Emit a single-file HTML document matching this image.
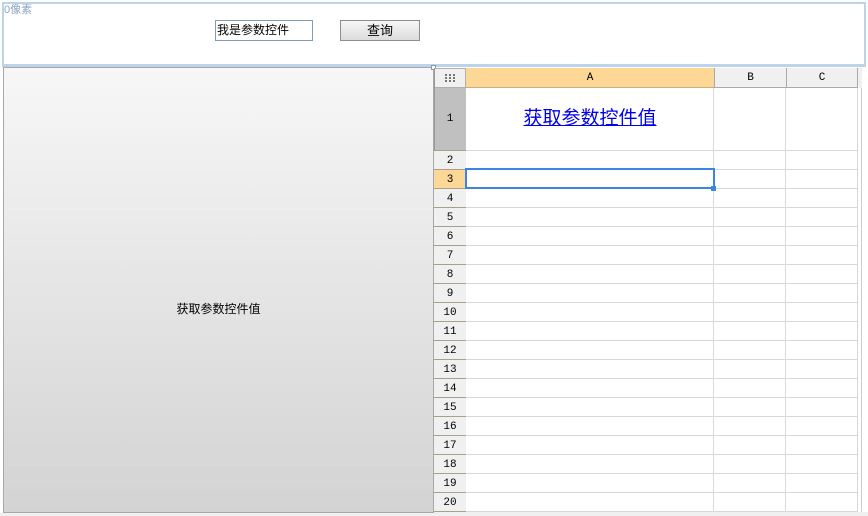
<!DOCTYPE html>
<html><head><meta charset="utf-8"><style>
*{margin:0;padding:0;box-sizing:border-box}
body{width:868px;height:516px;background:#fff;position:relative;overflow:hidden;font-family:"Liberation Sans","Noto Sans CJK SC",sans-serif;font-size:12px}
.a{position:absolute}
.rh{position:absolute;left:434px;width:32px;background:#f0f0f0;border-bottom:1px solid #a8a08c;text-align:center;font-family:"Liberation Mono","Noto Sans CJK SC",monospace;font-size:11px;color:#000;height:19px;line-height:20px}
.hl{position:absolute;left:466px;width:392px;height:1px;background:#d8d8d8}
</style></head><body>
<div class="a" style="left:2px;top:2px;width:864px;height:65px;border:2px solid #bcd3ea;border-bottom-width:3px"></div>
<div class="a" style="left:4px;top:1px;color:#8aa5c4;font-size:11px">0像素</div>
<div class="a" style="left:215px;top:20px;width:98px;height:21px;border:1px solid #7f9db9;font-size:12px;line-height:19px;padding-left:1px">我是参数控件</div>
<div class="a" style="left:340px;top:20px;width:80px;height:21px;border:1px solid #8e8e8e;background:linear-gradient(#f6f6f6,#dcdcdc);text-align:center;line-height:19px;font-size:13px">查询</div>
<div class="a" style="left:3px;top:67px;width:431px;height:446px;border:1px solid #a8a8a8;background:linear-gradient(#f7f7f7,#d3d3d3)"></div>
<div class="a" style="left:3px;top:300px;width:431px;text-align:center;font-size:12px">获取参数控件值</div>
<div class="a" style="left:431px;top:65px;width:5px;height:5px;border:1px solid #7f9db9;background:#fff"></div>
<div class="a" style="left:434px;top:68px;width:428px;height:445px;background:#fff;border-right:1px solid #ccc"></div>
<div class="a" style="left:434px;top:68px;width:32px;height:20px;background:#f0f0f0;border:1px solid #b0b0b0"><svg width="30" height="18" style="position:absolute;left:0;top:0"><g fill="#777"><rect x="10" y="5" width="2" height="2"/><rect x="14" y="5" width="2" height="2"/><rect x="18" y="5" width="2" height="2"/><rect x="10" y="8" width="2" height="2"/><rect x="14" y="8" width="2" height="2"/><rect x="18" y="8" width="2" height="2"/><rect x="10" y="11" width="2" height="2"/><rect x="14" y="11" width="2" height="2"/><rect x="18" y="11" width="2" height="2"/></g></svg></div>
<div class="a" style="left:466px;top:68px;width:248px;height:20px;background:#fdd795;border-bottom:1px solid #c8b080;text-align:center;line-height:20px;font-family:'Liberation Mono',monospace;font-size:11px">A</div>
<div class="a" style="left:714px;top:68px;width:72px;height:20px;background:#f0f0f0;border-left:1px solid #aaa;border-bottom:1px solid #aaa;text-align:center;line-height:20px;font-family:'Liberation Mono',monospace;font-size:11px">B</div>
<div class="a" style="left:786px;top:68px;width:72px;height:20px;background:#f0f0f0;border-left:1px solid #aaa;border-right:1px solid #aaa;border-bottom:1px solid #aaa;text-align:center;line-height:20px;font-family:'Liberation Mono',monospace;font-size:11px">C</div>
<div class="a" style="left:858px;top:68px;width:4px;height:20px;background:#f0f0f0"></div>
<div class="a" style="left:434px;top:88px;width:32px;height:63px;background:#c0c0c0;border-bottom:1px solid #a8a08c;text-align:center;line-height:63px;font-family:'Liberation Mono',monospace;font-size:11px">1</div>
<div class="a" style="left:466px;top:88px;width:248px;height:63px;text-align:center;line-height:62px;font-size:19px;color:#0000ee;text-decoration:underline">获取参数控件值</div>
<div class="a" style="left:713px;top:88px;width:1px;height:424px;background:#d8d8d8"></div>
<div class="a" style="left:785px;top:88px;width:1px;height:424px;background:#d8d8d8"></div>
<div class="a" style="left:857px;top:88px;width:1px;height:424px;background:#d8d8d8"></div>
<div class="a" style="left:434px;top:68px;width:1px;height:445px;background:#999"></div>
<div class="hl" style="top:150px"></div>
<div class="rh" style="top:151px">2</div><div class="hl" style="top:169px"></div>
<div class="rh" style="top:170px;background:#fdd795">3</div><div class="hl" style="top:188px"></div>
<div class="rh" style="top:189px">4</div><div class="hl" style="top:207px"></div>
<div class="rh" style="top:208px">5</div><div class="hl" style="top:226px"></div>
<div class="rh" style="top:227px">6</div><div class="hl" style="top:245px"></div>
<div class="rh" style="top:246px">7</div><div class="hl" style="top:264px"></div>
<div class="rh" style="top:265px">8</div><div class="hl" style="top:283px"></div>
<div class="rh" style="top:284px">9</div><div class="hl" style="top:302px"></div>
<div class="rh" style="top:303px">10</div><div class="hl" style="top:321px"></div>
<div class="rh" style="top:322px">11</div><div class="hl" style="top:340px"></div>
<div class="rh" style="top:341px">12</div><div class="hl" style="top:359px"></div>
<div class="rh" style="top:360px">13</div><div class="hl" style="top:378px"></div>
<div class="rh" style="top:379px">14</div><div class="hl" style="top:397px"></div>
<div class="rh" style="top:398px">15</div><div class="hl" style="top:416px"></div>
<div class="rh" style="top:417px">16</div><div class="hl" style="top:435px"></div>
<div class="rh" style="top:436px">17</div><div class="hl" style="top:454px"></div>
<div class="rh" style="top:455px">18</div><div class="hl" style="top:473px"></div>
<div class="rh" style="top:474px">19</div><div class="hl" style="top:492px"></div>
<div class="rh" style="top:493px">20</div><div class="hl" style="top:511px"></div>
<div class="a" style="left:465px;top:168px;width:250px;height:21px;border:2px solid #3b83e6"></div>
<div class="a" style="left:711px;top:186px;width:5px;height:5px;background:#3b83e6"></div>
<div class="a" style="left:434px;top:512px;width:434px;height:4px;background:#f0f0f0"></div>
<div class="a" style="left:0;top:513px;width:868px;height:3px;background:#f0f0f0"></div>
</body></html>
